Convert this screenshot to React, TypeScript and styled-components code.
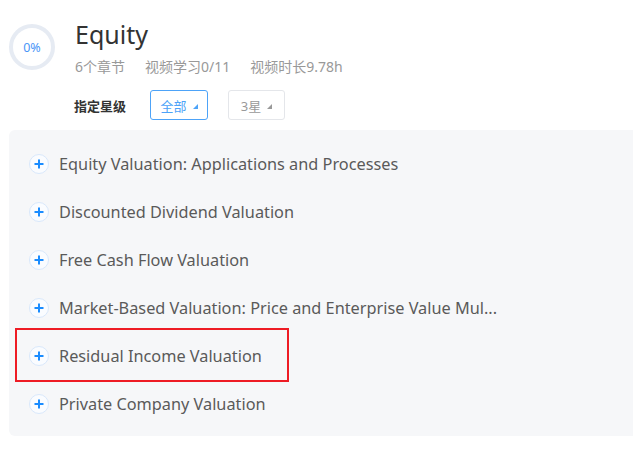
import React from 'react'
import styled, {createGlobalStyle} from 'styled-components'

const GlobalStyle = createGlobalStyle`
  html, body {
    margin: 0;
    padding: 0;
    background: #fff;
    overflow: hidden;
  }
  body {
    font-family: "Noto Sans", "Noto Sans CJK SC", sans-serif;
  }
`

const Page = styled.div`
  width: 633px;
  height: 456px;
  padding: 23px 0 0 9px;
  box-sizing: border-box;
`

const Header = styled.div`
  display: flex;
  align-items: flex-start;
  gap: 20px;
`

const Progress = styled.div`
  width: 46px;
  height: 46px;
  margin-top: 1px;
  border: 4px solid #e6ebf3;
  border-radius: 50%;
  box-sizing: border-box;
  display: flex;
  align-items: center;
  justify-content: center;
  font-size: 12.5px;
  color: #4a96f7;
`

const Info = styled.div`
  display: flex;
  flex-direction: column;
`

const Title = styled.div`
  font-size: 25px;
  line-height: 26px;
  color: #333;
  margin-top: -2px;
`

const Meta = styled.div`
  display: flex;
  gap: 20px;
  margin-top: 10px;
  font-size: 14px;
  line-height: 20px;
  color: #999;
`

const FilterRow = styled.div`
  display: flex;
  align-items: center;
  margin: 13px 0 0 -1px;
`

const FilterLabel = styled.div`
  font-size: 13px;
  font-weight: 700;
  color: #333;
  margin-right: 24px;
`

const FilterButton = styled.div<{$active?: boolean}>`
  height: 30px;
  width: ${p => (p.$active ? 58 : 57)}px;
  box-sizing: border-box;
  margin-right: 20px;
  border: 1px solid ${p => (p.$active ? '#4da3f8' : '#e4e6ea')};
  border-radius: 3px;
  display: flex;
  align-items: center;
  justify-content: center;
  gap: 6px;
  font-size: 13px;
  color: ${p => (p.$active ? '#4da3f8' : '#999')};

  &::after {
    content: '';
    width: 0;
    height: 0;
    margin-top: 2px;
    border-left: 5px solid transparent;
    border-bottom: 5px solid currentColor;
  }
`

const Panel = styled.div`
  margin-top: 10px;
  width: 640px;
  height: 306px;
  box-sizing: border-box;
  padding: 10px 0 8px 20px;
  background: #f6f7f9;
  border-radius: 6px;
`

const Row = styled.div<{$marked?: boolean}>`
  position: relative;
  height: 48px;
  display: flex;
  align-items: center;
  gap: 10px;
  font-size: 16.3px;
  color: #5a5a5a;

  ${p =>
    p.$marked &&
    `
    &::before {
      content: '';
      position: absolute;
      left: -14px;
      top: -4px;
      width: 274px;
      height: 54px;
      box-sizing: border-box;
      border: 2px solid #ee1c25;
    }
  `}
`

const PlusIcon = styled.span`
  width: 20px;
  height: 20px;
  flex: none;
  border-radius: 50%;
  border: 1px solid #d9e8fb;
  background: #fafcff;
  box-sizing: border-box;
  display: flex;
  align-items: center;
  justify-content: center;
`

const chapters = [
  'Equity Valuation: Applications and Processes',
  'Discounted Dividend Valuation',
  'Free Cash Flow Valuation',
  'Market-Based Valuation: Price and Enterprise Value Mul...',
  'Residual Income Valuation',
  'Private Company Valuation',
]

const Plus = () => (
  <PlusIcon>
    <svg width="12" height="12" viewBox="0 0 12 12">
      <path d="M6 1.5v9M1.5 6h9" stroke="#1a8cff" strokeWidth="2" />
    </svg>
  </PlusIcon>
)

export default function App() {
  return (
    <Page>
      <GlobalStyle />
      <Header>
        <Progress>0%</Progress>
        <Info>
          <Title>Equity</Title>
          <Meta>
            <span>6个章节</span>
            <span>视频学习0/11</span>
            <span>视频时长9.78h</span>
          </Meta>
          <FilterRow>
            <FilterLabel>指定星级</FilterLabel>
            <FilterButton $active>全部</FilterButton>
            <FilterButton>3星</FilterButton>
          </FilterRow>
        </Info>
      </Header>
      <Panel>
        {chapters.map((c, i) => (
          <Row key={c} $marked={i === 4}>
            <Plus />
            <span>{c}</span>
          </Row>
        ))}
      </Panel>
    </Page>
  )
}
